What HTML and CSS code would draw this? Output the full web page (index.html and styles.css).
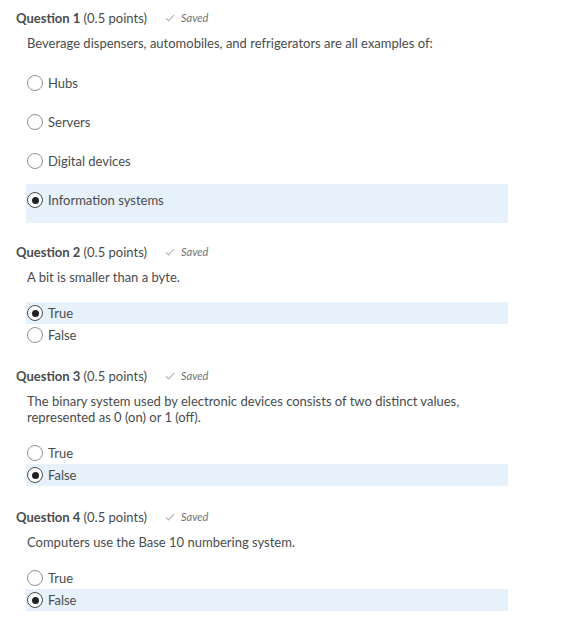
FILE: index.html
```html
<!DOCTYPE html>
<html>
<head>
<meta charset="utf-8">
<link rel="stylesheet" href="styles.css">
</head>
<body>
<div class="quiz">
  <section class="question q-first">
    <div class="q-header">
      <span class="q-title"><b>Question 1</b> (0.5 points)</span>
      <span class="saved"><svg class="check" width="10" height="8" viewBox="0 0 10 8"><path d="M0.8 4.2 L3.6 7 L9.2 0.8" fill="none" stroke="#b3b3b3" stroke-width="1.1"/></svg><i>Saved</i></span>
    </div>
    <p class="q-text">Beverage dispensers, automobiles, and refrigerators are all examples of:</p>
    <div class="options tall">
      <div class="option"><span class="radio"></span><span>Hubs</span></div>
      <div class="option"><span class="radio"></span><span>Servers</span></div>
      <div class="option"><span class="radio"></span><span>Digital devices</span></div>
      <div class="option selected"><span class="radio"></span><span>Information systems</span></div>
    </div>
  </section>

  <section class="question">
    <div class="q-header">
      <span class="q-title"><b>Question 2</b> (0.5 points)</span>
      <span class="saved"><svg class="check" width="10" height="8" viewBox="0 0 10 8"><path d="M0.8 4.2 L3.6 7 L9.2 0.8" fill="none" stroke="#b3b3b3" stroke-width="1.1"/></svg><i>Saved</i></span>
    </div>
    <p class="q-text">A bit is smaller than a byte.</p>
    <div class="options">
      <div class="option selected"><span class="radio"></span><span>True</span></div>
      <div class="option"><span class="radio"></span><span>False</span></div>
    </div>
  </section>

  <section class="question">
    <div class="q-header">
      <span class="q-title"><b>Question 3</b> (0.5 points)</span>
      <span class="saved"><svg class="check" width="10" height="8" viewBox="0 0 10 8"><path d="M0.8 4.2 L3.6 7 L9.2 0.8" fill="none" stroke="#b3b3b3" stroke-width="1.1"/></svg><i>Saved</i></span>
    </div>
    <p class="q-text">The binary system used by electronic devices consists of two distinct values,<br>represented as 0 (on) or 1 (off).</p>
    <div class="options">
      <div class="option"><span class="radio"></span><span>True</span></div>
      <div class="option selected"><span class="radio"></span><span>False</span></div>
    </div>
  </section>

  <section class="question q-last">
    <div class="q-header">
      <span class="q-title"><b>Question 4</b> (0.5 points)</span>
      <span class="saved"><svg class="check" width="10" height="8" viewBox="0 0 10 8"><path d="M0.8 4.2 L3.6 7 L9.2 0.8" fill="none" stroke="#b3b3b3" stroke-width="1.1"/></svg><i>Saved</i></span>
    </div>
    <p class="q-text">Computers use the Base 10 numbering system.</p>
    <div class="options">
      <div class="option"><span class="radio"></span><span>True</span></div>
      <div class="option selected"><span class="radio"></span><span>False</span></div>
    </div>
  </section>
</div>
</body>
</html>
```

FILE: styles.css
```css
html, body {
  margin: 0;
  padding: 0;
  background: #ffffff;
}
body {
  font-family: Lato, "Open Sans", sans-serif;
  color: #494c4e;
  font-size: 13px;
}
.quiz {
  padding: 8px 0 0 16px;
  display: flex;
  flex-direction: column;
  gap: 20px;
}
.q-first {
  margin-bottom: -1px;
}
.q-last {
  margin-top: 1px;
}
.q-header {
  display: flex;
  align-items: center;
  height: 20px;
  line-height: 20px;
}
.q-title {
  font-size: 13px;
}
.q-title b {
  font-weight: 700;
}
.saved {
  display: flex;
  align-items: center;
  margin-left: 18px;
  font-size: 11px;
  color: #6e7376;
}
.check {
  margin-right: 6px;
}
.q-text {
  margin: 7px 0 0 11px;
  line-height: 16px;
}
.options {
  margin: 17px 0 0 10px;
  width: 482px;
}
.options.tall {
  margin-top: 16px;
}
.option {
  display: flex;
  align-items: center;
  height: 22px;
  padding-left: 1px;
  gap: 5px;
}
.options.tall .option {
  height: 39px;
  box-sizing: border-box;
  padding-top: 5px;
  padding-bottom: 12px;
}
.option.selected {
  background: #e7f1fb;
}
.radio {
  width: 16px;
  height: 16px;
  box-sizing: border-box;
  border-radius: 50%;
  border: 1px solid #8f9294;
  background: #fff;
  display: flex;
  align-items: center;
  justify-content: center;
  flex: none;
}
.selected .radio {
  border: 1.5px solid #494c4e;
}
.selected .radio::after {
  content: "";
  width: 7px;
  height: 7px;
  border-radius: 50%;
  background: #202122;
}
```
